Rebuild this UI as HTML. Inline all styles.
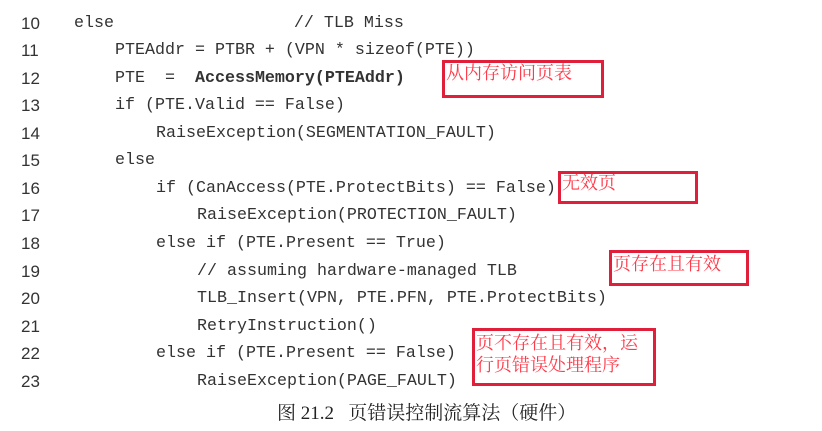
<!DOCTYPE html>
<html><head><meta charset="utf-8"><style>
body{margin:0;width:822px;height:431px;background:#fff;position:relative;overflow:hidden}
.l{position:absolute;font-family:"Liberation Mono",monospace;font-size:16.67px;color:#333;white-space:pre;line-height:20px;margin-top:2px}
.n{position:absolute;left:21px;font-family:"Liberation Sans",sans-serif;font-size:17px;color:#333;line-height:20px;margin-top:2px}
.b{position:absolute;border:3px solid #e0203a;box-sizing:border-box}
.t{position:absolute;font-family:"Liberation Serif","Noto Serif CJK SC",serif;font-size:18px;color:#ff3a4a;line-height:22px;white-space:pre}
</style></head><body>
<div class="n" style="top:12px">10</div><div class="l" style="left:74px;top:12px">else                  // TLB Miss</div>
<div class="n" style="top:39px">11</div><div class="l" style="left:115px;top:39px">PTEAddr = PTBR + (VPN * sizeof(PTE))</div>
<div class="n" style="top:67px">12</div><div class="l" style="left:115px;top:67px">PTE  =  <b>AccessMemory(PTEAddr)</b></div>
<div class="n" style="top:94px">13</div><div class="l" style="left:115px;top:94px">if (PTE.Valid == False)</div>
<div class="n" style="top:122px">14</div><div class="l" style="left:156px;top:122px">RaiseException(SEGMENTATION_FAULT)</div>
<div class="n" style="top:149px">15</div><div class="l" style="left:115px;top:149px">else</div>
<div class="n" style="top:177px">16</div><div class="l" style="left:156px;top:177px">if (CanAccess(PTE.ProtectBits) == False)</div>
<div class="n" style="top:204px">17</div><div class="l" style="left:197px;top:204px">RaiseException(PROTECTION_FAULT)</div>
<div class="n" style="top:232px">18</div><div class="l" style="left:156px;top:232px">else if (PTE.Present == True)</div>
<div class="n" style="top:260px">19</div><div class="l" style="left:197px;top:260px">// assuming hardware-managed TLB</div>
<div class="n" style="top:287px">20</div><div class="l" style="left:197px;top:287px">TLB_Insert(VPN, PTE.PFN, PTE.ProtectBits)</div>
<div class="n" style="top:315px">21</div><div class="l" style="left:197px;top:315px">RetryInstruction()</div>
<div class="n" style="top:342px">22</div><div class="l" style="left:156px;top:342px">else if (PTE.Present == False)</div>
<div class="n" style="top:370px">23</div><div class="l" style="left:197px;top:370px">RaiseException(PAGE_FAULT)</div>

<div class="b" style="left:442px;top:60px;width:162px;height:38px"></div>
<div class="t" style="left:446px;top:62px">从内存访问页表</div>
<div class="b" style="left:558px;top:171px;width:140px;height:33px"></div>
<div class="t" style="left:562px;top:172px">无效页</div>
<div class="b" style="left:609px;top:250px;width:140px;height:36px"></div>
<div class="t" style="left:613px;top:253px">页存在且有效</div>
<div class="b" style="left:472px;top:328px;width:184px;height:58px"></div>
<div class="t" style="left:476px;top:332px">页不存在且有效，运
行页错误处理程序</div>

<div style="position:absolute;left:277px;top:398px;font-family:'Liberation Serif','Noto Serif CJK SC',serif;font-size:19px;color:#222;white-space:pre">图 21.2   页错误控制流算法（硬件）</div>
</body></html>
